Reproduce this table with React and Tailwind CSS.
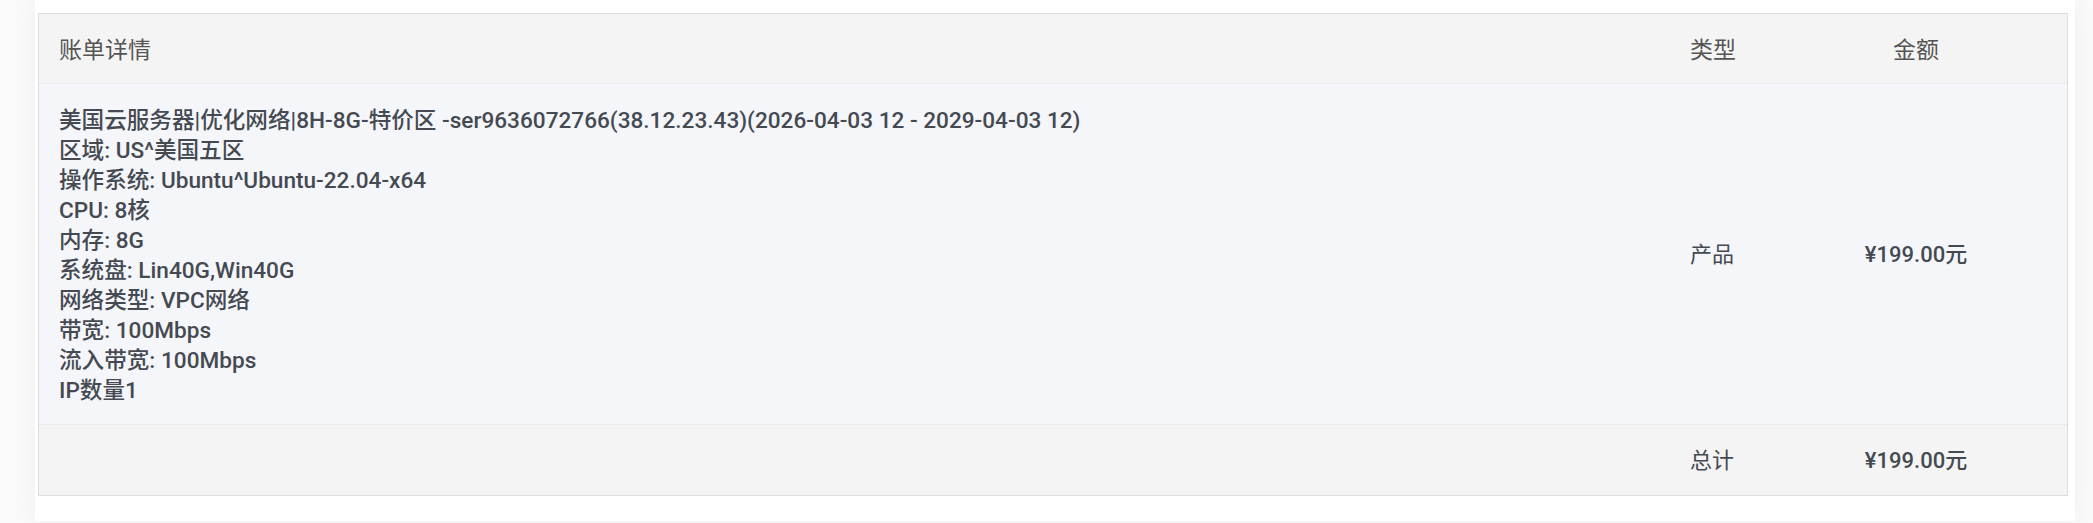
const DETAILS = [
  '美国云服务器|优化网络|8H-8G-特价区 -ser9636072766(38.12.23.43)(2026-04-03 12 - 2029-04-03 12)',
  '区域: US^美国五区',
  '操作系统: Ubuntu^Ubuntu-22.04-x64',
  'CPU: 8核',
  '内存: 8G',
  '系统盘: Lin40G,Win40G',
  '网络类型: VPC网络',
  '带宽: 100Mbps',
  '流入带宽: 100Mbps',
  'IP数量1',
]

const FONT = { fontFamily: 'Roboto, "Noto Sans CJK SC", sans-serif' }

export default function App() {
  return (
    <div className="w-[2093px] h-[523px] bg-[#fafafa] overflow-hidden" style={FONT}>
      <div className="ml-[35px] w-[2040px] h-[521px] bg-white shadow-[0_0_24px_rgba(0,0,0,0.05)] pt-[13px] pl-[3px]">
        <div className="w-[2030px] border border-[#dcdcdc] text-[#454a52]">
          {/* header */}
          <div className="flex h-[70px] items-center pt-[6px] bg-[#f4f4f4] border-b border-dotted border-[#dfe3e8] text-[23px] text-[#555]">
            <div className="flex-1 pl-[20px]">账单详情</div>
            <div className="w-[90px] pl-[15px]">类型</div>
            <div className="w-[302px] text-center">金额</div>
          </div>

          {/* item row */}
          <div className="flex items-center bg-[#f5f6fa] border-b border-dotted border-[#dfe3e8]">
            <div className="flex-1 pl-[20px] pt-[22px] pb-[18px] text-[22.6px] leading-[30px] font-medium">
              {DETAILS.map((line) => (
                <div key={line}>{line}</div>
              ))}
            </div>
            <div className="w-[90px] pl-[15px] text-[22px]">产品</div>
            <div className="w-[302px] text-center text-[22px] font-medium">¥199.00元</div>
          </div>

          {/* total */}
          <div className="flex h-[70px] items-center bg-[#f4f4f4]">
            <div className="flex-1" />
            <div className="w-[90px] pl-[15px] text-[22px]">总计</div>
            <div className="w-[302px] text-center text-[22px] font-medium">¥199.00元</div>
          </div>
        </div>
      </div>
    </div>
  )
}
